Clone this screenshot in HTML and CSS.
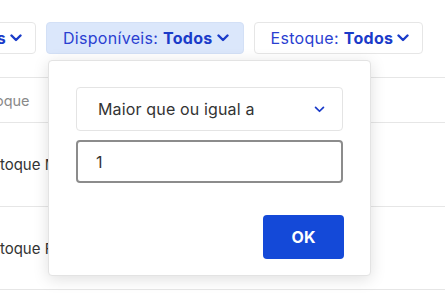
FILE: index.html
```html
<!DOCTYPE html>
<html lang="pt-BR">
<head>
<meta charset="utf-8">
<title>Filtros</title>
<link rel="stylesheet" href="styles.css">
</head>
<body>
<div class="page">
  <div class="filters">
    <div class="clip">
      <button class="filter"><span class="label">Tipo: </span><b>Todos</b>
        <svg class="chev" viewBox="0 0 12 8" width="12" height="8"><path d="M1.5 1.5 L6 6 L10.5 1.5" fill="none" stroke="currentColor" stroke-width="2.4" stroke-linecap="round" stroke-linejoin="round"/></svg>
      </button>
    </div>
    <button class="filter active"><span class="label">Disponíveis: </span><b>Todos</b>
      <svg class="chev" viewBox="0 0 12 8" width="12" height="8"><path d="M1.5 1.5 L6 6 L10.5 1.5" fill="none" stroke="currentColor" stroke-width="2.4" stroke-linecap="round" stroke-linejoin="round"/></svg>
    </button>
    <button class="filter"><span class="label">Estoque: </span><b>Todos</b>
      <svg class="chev" viewBox="0 0 12 8" width="12" height="8"><path d="M1.5 1.5 L6 6 L10.5 1.5" fill="none" stroke="currentColor" stroke-width="2.4" stroke-linecap="round" stroke-linejoin="round"/></svg>
    </button>
  </div>

  <div class="table">
    <div class="row head"><span class="cell">Estoque</span></div>
    <div class="row"><span class="cell">Estoque Mínimo</span></div>
    <div class="row"><span class="cell">Estoque Físico</span></div>
  </div>

  <div class="popover">
    <div class="select">
      <span>Maior que ou igual a</span>
      <svg class="select-chev" viewBox="0 0 12 8" width="11" height="7"><path d="M1.5 1.5 L6 6 L10.5 1.5" fill="none" stroke="currentColor" stroke-width="2" stroke-linecap="round" stroke-linejoin="round"/></svg>
    </div>
    <div class="input">1</div>
    <div class="actions">
      <button class="ok">OK</button>
    </div>
  </div>
</div>
</body>
</html>
```

FILE: styles.css
```css
* { box-sizing: border-box; }
html, body { margin: 0; padding: 0; background: #fff; }
body { font-family: "Inter", "Liberation Sans", sans-serif; color: #333; overflow: hidden; }

.page { position: relative; width: 445px; height: 294px; overflow: hidden; }

.filters {
  display: flex;
  gap: 10px;
  padding-top: 22px;
  height: 54px;
}

.clip {
  width: 36px;
  height: 32px;
  flex: none;
  display: flex;
  justify-content: flex-end;
  overflow: hidden;
}

.filter {
  display: flex;
  align-items: center;
  height: 32px;
  padding: 0 13px 0 16px;
  border: 1px solid #e6e6e6;
  border-radius: 4px;
  background: #fff;
  color: #2a3fd1;
  font-family: "Inter", "Liberation Sans", sans-serif;
  font-size: 16px;
  letter-spacing: 0.3px;
  white-space: nowrap;
  flex: none;
}
.filter .label { font-weight: 400; white-space: pre; }
.filter b { font-weight: 700; color: #1a3bc9; }
.filter .chev { margin-left: 4px; color: #1a3bc9; }

.filter.active {
  background: #dbe7fb;
  border-color: #d3e0f6;
  padding-right: 14px;
}

.table { margin-top: 23px; margin-left: -17px; }
.row {
  display: flex;
  align-items: center;
  border-top: 1px solid #e6e6e6;
  height: 84px;
  font-size: 15px;
  color: #333;
}
.row.head { height: 45px; color: #8a8a8a; font-size: 14.5px; margin-left: -9px; }
.row:last-child { border-bottom: 1px solid #e6e6e6; }

.popover {
  position: absolute;
  left: 48px;
  top: 60px;
  width: 323px;
  height: 216px;
  background: #fff;
  border: 1px solid #e3e3e3;
  border-radius: 4px;
  box-shadow: 0 3px 16px rgba(0, 0, 0, 0.13);
  padding: 26px 27px 0 27px;
  display: flex;
  flex-direction: column;
}

.select {
  height: 44px;
  border: 1.5px solid #e4e4e4;
  border-radius: 4px;
  display: flex;
  align-items: center;
  justify-content: space-between;
  padding: 0 17px 0 21px;
  font-size: 16px;
  letter-spacing: 0.15px;
  color: #333;
}
.select-chev { color: #1a3bc9; }

.input {
  margin-top: 9px;
  height: 43px;
  border: 2px solid #8c8c8c;
  border-radius: 4px;
  display: flex;
  align-items: center;
  padding: 0 18px;
  font-size: 16px;
  color: #333;
}

.actions {
  display: flex;
  justify-content: flex-end;
  margin-top: 32px;
  margin-right: -1px;
}
.ok {
  width: 81px;
  height: 44px;
  border: none;
  border-radius: 4px;
  background: #1449d8;
  color: #fff;
  font-family: "Inter", "Liberation Sans", sans-serif;
  font-weight: 700;
  font-size: 16px;
}
```
